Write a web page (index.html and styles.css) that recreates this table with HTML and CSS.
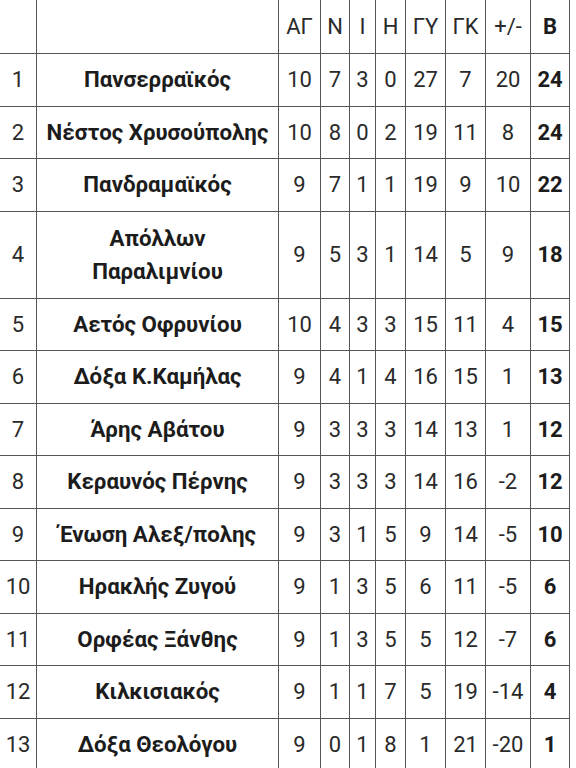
FILE: index.html
```html
<!DOCTYPE html>
<html lang="el">
<head>
<meta charset="utf-8">
<link rel="stylesheet" href="styles.css">
</head>
<body>
<table class="standings">
<colgroup>
<col class="c-pos"><col class="c-team"><col class="c-ag"><col class="c-n"><col class="c-i"><col class="c-h"><col class="c-gy"><col class="c-gk"><col class="c-diff"><col class="c-pts">
</colgroup>
<thead>
<tr class="head"><th></th><th></th><th>ΑΓ</th><th>Ν</th><th>Ι</th><th>Η</th><th>ΓΥ</th><th>ΓΚ</th><th>+/-</th><th class="pts">Β</th></tr>
</thead>
<tbody>
<tr><td>1</td><td class="team">Πανσερραϊκός</td><td>10</td><td>7</td><td>3</td><td>0</td><td>27</td><td>7</td><td>20</td><td class="pts">24</td></tr>
<tr><td>2</td><td class="team">Νέστος Χρυσούπολης</td><td>10</td><td>8</td><td>0</td><td>2</td><td>19</td><td>11</td><td>8</td><td class="pts">24</td></tr>
<tr><td>3</td><td class="team">Πανδραμαϊκός</td><td>9</td><td>7</td><td>1</td><td>1</td><td>19</td><td>9</td><td>10</td><td class="pts">22</td></tr>
<tr class="tall"><td>4</td><td class="team">Απόλλων<br>Παραλιμνίου</td><td>9</td><td>5</td><td>3</td><td>1</td><td>14</td><td>5</td><td>9</td><td class="pts">18</td></tr>
<tr><td>5</td><td class="team">Αετός Οφρυνίου</td><td>10</td><td>4</td><td>3</td><td>3</td><td>15</td><td>11</td><td>4</td><td class="pts">15</td></tr>
<tr><td>6</td><td class="team">Δόξα Κ.Καμήλας</td><td>9</td><td>4</td><td>1</td><td>4</td><td>16</td><td>15</td><td>1</td><td class="pts">13</td></tr>
<tr><td>7</td><td class="team">Άρης Αβάτου</td><td>9</td><td>3</td><td>3</td><td>3</td><td>14</td><td>13</td><td>1</td><td class="pts">12</td></tr>
<tr><td>8</td><td class="team">Κεραυνός Πέρνης</td><td>9</td><td>3</td><td>3</td><td>3</td><td>14</td><td>16</td><td>-2</td><td class="pts">12</td></tr>
<tr><td>9</td><td class="team">Ένωση Αλεξ/πολης</td><td>9</td><td>3</td><td>1</td><td>5</td><td>9</td><td>14</td><td>-5</td><td class="pts">10</td></tr>
<tr><td>10</td><td class="team">Ηρακλής Ζυγού</td><td>9</td><td>1</td><td>3</td><td>5</td><td>6</td><td>11</td><td>-5</td><td class="pts">6</td></tr>
<tr><td>11</td><td class="team">Ορφέας Ξάνθης</td><td>9</td><td>1</td><td>3</td><td>5</td><td>5</td><td>12</td><td>-7</td><td class="pts">6</td></tr>
<tr><td>12</td><td class="team">Κιλκισιακός</td><td>9</td><td>1</td><td>1</td><td>7</td><td>5</td><td>19</td><td>-14</td><td class="pts">4</td></tr>
<tr><td>13</td><td class="team">Δόξα Θεολόγου</td><td>9</td><td>0</td><td>1</td><td>8</td><td>1</td><td>21</td><td>-20</td><td class="pts">1</td></tr>
</tbody>
</table>
</body>
</html>
```
FILE: styles.css
```css
html, body {
  margin: 0;
  padding: 0;
  background: #ffffff;
}
body {
  overflow: hidden;
  font-family: Roboto, "Liberation Sans", sans-serif;
  color: #2a2a2a;
}
.standings {
  border-collapse: collapse;
  table-layout: fixed;
  width: 570px;
  margin: -1px 0 0 -1px;
  font-size: 22px;
}
.c-pos { width: 37px; }
.c-team { width: 242px; }
.c-ag { width: 42px; }
.c-n { width: 29px; }
.c-i { width: 26px; }
.c-h { width: 30px; }
.c-gy { width: 40px; }
.c-gk { width: 40px; }
.c-diff { width: 45px; }
.c-pts { width: 39px; }
.standings th,
.standings td {
  border: 1.5px solid #555;
  padding: 0;
  text-align: center;
  vertical-align: middle;
  font-weight: 400;
  white-space: nowrap;
}
.standings tr { height: 52.5px; }
.standings tr.head { height: 54px; }
.standings tr.tall { height: 87px; }
.standings .team {
  font-weight: 700;
  font-size: 22.3px;
  color: #1c1c1c;
  line-height: 33px;
}
.standings .pts {
  font-weight: 700;
  color: #1c1c1c;
}
```
